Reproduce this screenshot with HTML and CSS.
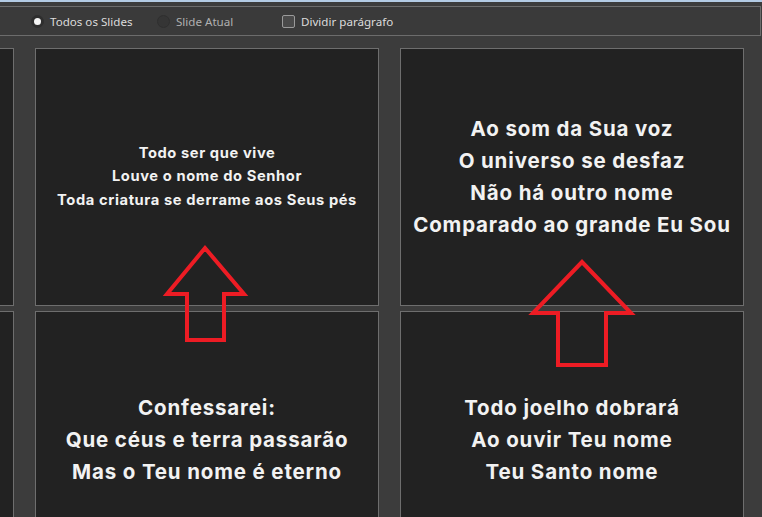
FILE: index.html
```html
<!DOCTYPE html>
<html lang="pt">
<head>
<meta charset="utf-8">
<title>Slides</title>
<link rel="stylesheet" href="styles.css">
</head>
<body>
<div class="topline"></div>
<div class="toolbar">
  <label class="opt opt-1"><span class="radio checked"></span><span class="lbl">Todos os Slides</span></label>
  <label class="opt opt-2"><span class="radio"></span><span class="lbl dim">Slide Atual</span></label>
  <label class="opt opt-3"><span class="check"></span><span class="lbl">Dividir parágrafo</span></label>
</div>
<div class="grid">
  <div class="card"></div>
  <div class="card small">
    <p>Todo ser que vive</p>
    <p>Louve o nome do Senhor</p>
    <p>Toda criatura se derrame aos Seus pés</p>
  </div>
  <div class="card">
    <p>Ao som da Sua voz</p>
    <p>O universo se desfaz</p>
    <p>Não há outro nome</p>
    <p>Comparado ao grande Eu Sou</p>
  </div>
  <div class="card"></div>
  <div class="card">
    <p>Confessarei:</p>
    <p>Que céus e terra passarão</p>
    <p>Mas o Teu nome é eterno</p>
  </div>
  <div class="card">
    <p>Todo joelho dobrará</p>
    <p>Ao ouvir Teu nome</p>
    <p>Teu Santo nome</p>
  </div>
</div>
<svg class="arrows" width="762" height="517" viewBox="0 0 762 517">
  <polygon points="205,248 244,294 224,294 224,340 187,340 187,294 167,294" />
  <polygon points="582,262 631,313 606,313 606,365 558,365 558,313 533,313" />
</svg>
</body>
</html>
```
FILE: styles.css
```css
html, body {
  margin: 0;
  padding: 0;
}
body {
  width: 762px;
  height: 517px;
  overflow: hidden;
  background: #3c3c3c;
  position: relative;
  font-family: "Noto Sans", "Open Sans", sans-serif;
}
.topline {
  height: 2px;
  background: #b3cbe4;
}
.toolbar {
  margin: 4px 1px 0 -4px;
  height: 28px;
  border: 1px solid #6c6c6c;
  background: #3a3a3a;
  display: flex;
  align-items: center;
  padding-left: 34px;
}
.opt {
  display: flex;
  align-items: center;
  font-size: 11.6px;
  color: #dcdcdc;
}
.opt-1 { width: 126px; }
.opt-2 { width: 125px; }
.radio {
  width: 13px;
  height: 13px;
  border-radius: 50%;
  border: 1px solid #2f2f2f;
  box-sizing: border-box;
  background: #353535;
  margin-right: 6px;
  display: flex;
  align-items: center;
  justify-content: center;
}
.radio.checked {
  background: #2e2e2e;
  border-color: #2e2e2e;
}
.radio.checked::after {
  content: "";
  width: 7px;
  height: 7px;
  border-radius: 50%;
  background: #f4f4f4;
}
.lbl.dim { color: #b0b0b0; }
.check {
  width: 13px;
  height: 13px;
  box-sizing: border-box;
  border: 1px solid #9a9a9a;
  border-radius: 2px;
  background: #4a4a4a;
  margin-right: 6px;
}
.grid {
  margin: 12px 0 0 -330px;
  display: grid;
  grid-template-columns: 344px 344px 344px;
  grid-auto-rows: 258px;
  column-gap: 21px;
  row-gap: 5px;
}
.card {
  background: #222222;
  border: 1px solid #6e6e6e;
  box-sizing: border-box;
  display: flex;
  flex-direction: column;
  justify-content: center;
  align-items: center;
  color: #f2f2f2;
  font-family: "Inter", "DejaVu Sans", sans-serif;
  font-weight: 700;
  font-size: 20.5px;
  letter-spacing: 0.85px;
  line-height: 32px;
  text-align: center;
}
.card p {
  margin: 0;
  white-space: nowrap;
}
.card.small {
  font-size: 14.7px;
  letter-spacing: 0.6px;
  line-height: 23.5px;
}
.arrows {
  position: absolute;
  left: 0;
  top: 0;
  pointer-events: none;
}
.arrows polygon {
  fill: none;
  stroke: #ed1c24;
  stroke-width: 4;
  stroke-linejoin: miter;
}
```
